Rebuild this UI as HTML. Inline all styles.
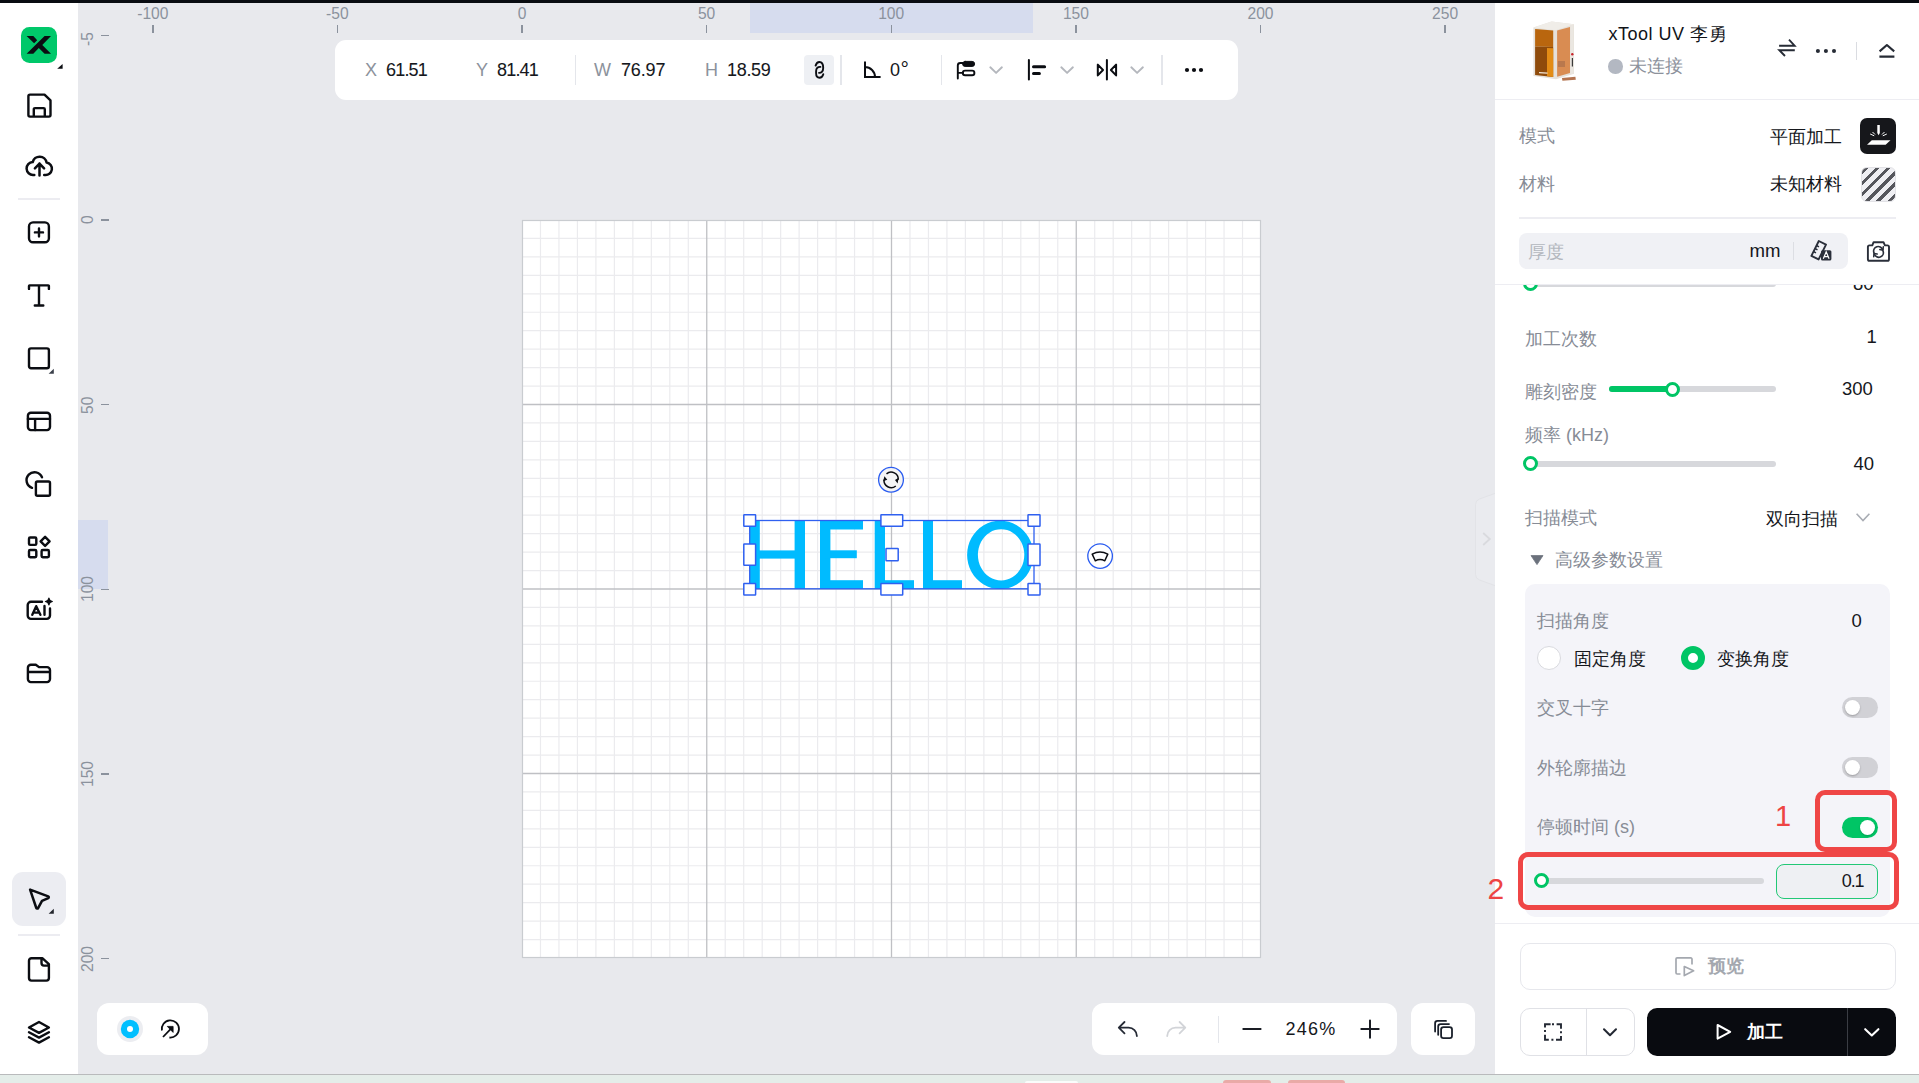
<!DOCTYPE html>
<html><head><meta charset="utf-8">
<style>
*{box-sizing:border-box;margin:0;padding:0}
html,body{width:1919px;height:1083px;overflow:hidden}
body{background:#e8e9ed;font-family:"Liberation Sans",sans-serif;position:relative;color:#111}
.a{position:absolute}
.t{position:absolute;white-space:nowrap;line-height:1}
.rl{position:absolute;text-align:center;font-size:15.6px;line-height:15px;color:#8b929d}
.rlv{position:absolute;width:22px;font-size:15.6px;line-height:22px;color:#8b929d;writing-mode:vertical-rl;transform:rotate(180deg);text-align:center}
.tk{position:absolute;background:#8b929d}
svg{position:absolute;overflow:visible}
.ic{fill:none;stroke:#0b0d12;stroke-linecap:round;stroke-linejoin:round}
.gray{color:#8a909b}
</style></head><body>
<!-- top dark bar -->
<div class="a" style="left:0;top:0;width:1919px;height:3px;background:#090c11"></div>

<!-- canvas rulers -->
<div class="a" style="left:750px;top:3px;width:283px;height:30px;background:#d6dcee"></div>
<div class="a" style="left:78px;top:520px;width:30px;height:69px;background:#d6dcee"></div>
<div class="a" style="left:78px;top:3px;width:1417px;height:1071px;overflow:hidden">
 <div class="a" style="left:-78px;top:-3px;width:1919px;height:1083px">
 <div class="rl" style="left:122.8px;top:5.8px;width:60px">-100</div><div class="tk" style="left:152.0px;top:25px;width:1.5px;height:8px"></div><div class="rl" style="left:307.4px;top:5.8px;width:60px">-50</div><div class="tk" style="left:336.6px;top:25px;width:1.5px;height:8px"></div><div class="rl" style="left:492.0px;top:5.8px;width:60px">0</div><div class="tk" style="left:521.2px;top:25px;width:1.5px;height:8px"></div><div class="rl" style="left:676.6px;top:5.8px;width:60px">50</div><div class="tk" style="left:705.9px;top:25px;width:1.5px;height:8px"></div><div class="rl" style="left:861.2px;top:5.8px;width:60px">100</div><div class="tk" style="left:890.5px;top:25px;width:1.5px;height:8px"></div><div class="rl" style="left:1045.9px;top:5.8px;width:60px">150</div><div class="tk" style="left:1075.1px;top:25px;width:1.5px;height:8px"></div><div class="rl" style="left:1230.5px;top:5.8px;width:60px">200</div><div class="tk" style="left:1259.8px;top:25px;width:1.5px;height:8px"></div><div class="rl" style="left:1415.1px;top:5.8px;width:60px">250</div><div class="tk" style="left:1444.4px;top:25px;width:1.5px;height:8px"></div><div class="rlv" style="left:76.8px;top:5.4px;height:60px">-50</div><div class="tk" style="left:100.5px;top:34.6px;width:8px;height:1.5px"></div><div class="rlv" style="left:76.8px;top:190.0px;height:60px">0</div><div class="tk" style="left:100.5px;top:219.2px;width:8px;height:1.5px"></div><div class="rlv" style="left:76.8px;top:374.6px;height:60px">50</div><div class="tk" style="left:100.5px;top:403.9px;width:8px;height:1.5px"></div><div class="rlv" style="left:76.8px;top:559.2px;height:60px">100</div><div class="tk" style="left:100.5px;top:588.5px;width:8px;height:1.5px"></div><div class="rlv" style="left:76.8px;top:743.9px;height:60px">150</div><div class="tk" style="left:100.5px;top:773.1px;width:8px;height:1.5px"></div><div class="rlv" style="left:76.8px;top:928.5px;height:60px">200</div><div class="tk" style="left:100.5px;top:957.8px;width:8px;height:1.5px"></div>
 </div>
</div>
<div class="a" style="left:78px;top:3px;width:30px;height:30px;background:#e8e9ed"></div>

<!-- grid -->
<div class="a" style="left:522px;top:220px;width:739px;height:738px;background:#fff">
<svg width="739" height="738" style="position:absolute;left:0;top:0"><line x1="18.48" y1="0" x2="18.48" y2="738" stroke="#ebebee" stroke-width="1.2"/><line x1="36.95" y1="0" x2="36.95" y2="738" stroke="#ebebee" stroke-width="1.2"/><line x1="55.42" y1="0" x2="55.42" y2="738" stroke="#ebebee" stroke-width="1.2"/><line x1="73.90" y1="0" x2="73.90" y2="738" stroke="#ebebee" stroke-width="1.2"/><line x1="92.38" y1="0" x2="92.38" y2="738" stroke="#ebebee" stroke-width="1.2"/><line x1="110.85" y1="0" x2="110.85" y2="738" stroke="#ebebee" stroke-width="1.2"/><line x1="129.32" y1="0" x2="129.32" y2="738" stroke="#ebebee" stroke-width="1.2"/><line x1="147.80" y1="0" x2="147.80" y2="738" stroke="#ebebee" stroke-width="1.2"/><line x1="166.28" y1="0" x2="166.28" y2="738" stroke="#ebebee" stroke-width="1.2"/><line x1="203.22" y1="0" x2="203.22" y2="738" stroke="#ebebee" stroke-width="1.2"/><line x1="221.70" y1="0" x2="221.70" y2="738" stroke="#ebebee" stroke-width="1.2"/><line x1="240.18" y1="0" x2="240.18" y2="738" stroke="#ebebee" stroke-width="1.2"/><line x1="258.65" y1="0" x2="258.65" y2="738" stroke="#ebebee" stroke-width="1.2"/><line x1="277.12" y1="0" x2="277.12" y2="738" stroke="#ebebee" stroke-width="1.2"/><line x1="295.60" y1="0" x2="295.60" y2="738" stroke="#ebebee" stroke-width="1.2"/><line x1="314.07" y1="0" x2="314.07" y2="738" stroke="#ebebee" stroke-width="1.2"/><line x1="332.55" y1="0" x2="332.55" y2="738" stroke="#ebebee" stroke-width="1.2"/><line x1="351.02" y1="0" x2="351.02" y2="738" stroke="#ebebee" stroke-width="1.2"/><line x1="387.98" y1="0" x2="387.98" y2="738" stroke="#ebebee" stroke-width="1.2"/><line x1="406.45" y1="0" x2="406.45" y2="738" stroke="#ebebee" stroke-width="1.2"/><line x1="424.93" y1="0" x2="424.93" y2="738" stroke="#ebebee" stroke-width="1.2"/><line x1="443.40" y1="0" x2="443.40" y2="738" stroke="#ebebee" stroke-width="1.2"/><line x1="461.88" y1="0" x2="461.88" y2="738" stroke="#ebebee" stroke-width="1.2"/><line x1="480.35" y1="0" x2="480.35" y2="738" stroke="#ebebee" stroke-width="1.2"/><line x1="498.82" y1="0" x2="498.82" y2="738" stroke="#ebebee" stroke-width="1.2"/><line x1="517.30" y1="0" x2="517.30" y2="738" stroke="#ebebee" stroke-width="1.2"/><line x1="535.77" y1="0" x2="535.77" y2="738" stroke="#ebebee" stroke-width="1.2"/><line x1="572.73" y1="0" x2="572.73" y2="738" stroke="#ebebee" stroke-width="1.2"/><line x1="591.20" y1="0" x2="591.20" y2="738" stroke="#ebebee" stroke-width="1.2"/><line x1="609.67" y1="0" x2="609.67" y2="738" stroke="#ebebee" stroke-width="1.2"/><line x1="628.15" y1="0" x2="628.15" y2="738" stroke="#ebebee" stroke-width="1.2"/><line x1="646.62" y1="0" x2="646.62" y2="738" stroke="#ebebee" stroke-width="1.2"/><line x1="665.10" y1="0" x2="665.10" y2="738" stroke="#ebebee" stroke-width="1.2"/><line x1="683.58" y1="0" x2="683.58" y2="738" stroke="#ebebee" stroke-width="1.2"/><line x1="702.05" y1="0" x2="702.05" y2="738" stroke="#ebebee" stroke-width="1.2"/><line x1="720.52" y1="0" x2="720.52" y2="738" stroke="#ebebee" stroke-width="1.2"/><line x1="0" y1="18.45" x2="739" y2="18.45" stroke="#ebebee" stroke-width="1.2"/><line x1="0" y1="36.90" x2="739" y2="36.90" stroke="#ebebee" stroke-width="1.2"/><line x1="0" y1="55.35" x2="739" y2="55.35" stroke="#ebebee" stroke-width="1.2"/><line x1="0" y1="73.80" x2="739" y2="73.80" stroke="#ebebee" stroke-width="1.2"/><line x1="0" y1="92.25" x2="739" y2="92.25" stroke="#ebebee" stroke-width="1.2"/><line x1="0" y1="110.70" x2="739" y2="110.70" stroke="#ebebee" stroke-width="1.2"/><line x1="0" y1="129.15" x2="739" y2="129.15" stroke="#ebebee" stroke-width="1.2"/><line x1="0" y1="147.60" x2="739" y2="147.60" stroke="#ebebee" stroke-width="1.2"/><line x1="0" y1="166.05" x2="739" y2="166.05" stroke="#ebebee" stroke-width="1.2"/><line x1="0" y1="202.95" x2="739" y2="202.95" stroke="#ebebee" stroke-width="1.2"/><line x1="0" y1="221.40" x2="739" y2="221.40" stroke="#ebebee" stroke-width="1.2"/><line x1="0" y1="239.85" x2="739" y2="239.85" stroke="#ebebee" stroke-width="1.2"/><line x1="0" y1="258.30" x2="739" y2="258.30" stroke="#ebebee" stroke-width="1.2"/><line x1="0" y1="276.75" x2="739" y2="276.75" stroke="#ebebee" stroke-width="1.2"/><line x1="0" y1="295.20" x2="739" y2="295.20" stroke="#ebebee" stroke-width="1.2"/><line x1="0" y1="313.65" x2="739" y2="313.65" stroke="#ebebee" stroke-width="1.2"/><line x1="0" y1="332.10" x2="739" y2="332.10" stroke="#ebebee" stroke-width="1.2"/><line x1="0" y1="350.55" x2="739" y2="350.55" stroke="#ebebee" stroke-width="1.2"/><line x1="0" y1="387.45" x2="739" y2="387.45" stroke="#ebebee" stroke-width="1.2"/><line x1="0" y1="405.90" x2="739" y2="405.90" stroke="#ebebee" stroke-width="1.2"/><line x1="0" y1="424.35" x2="739" y2="424.35" stroke="#ebebee" stroke-width="1.2"/><line x1="0" y1="442.80" x2="739" y2="442.80" stroke="#ebebee" stroke-width="1.2"/><line x1="0" y1="461.25" x2="739" y2="461.25" stroke="#ebebee" stroke-width="1.2"/><line x1="0" y1="479.70" x2="739" y2="479.70" stroke="#ebebee" stroke-width="1.2"/><line x1="0" y1="498.15" x2="739" y2="498.15" stroke="#ebebee" stroke-width="1.2"/><line x1="0" y1="516.60" x2="739" y2="516.60" stroke="#ebebee" stroke-width="1.2"/><line x1="0" y1="535.05" x2="739" y2="535.05" stroke="#ebebee" stroke-width="1.2"/><line x1="0" y1="571.95" x2="739" y2="571.95" stroke="#ebebee" stroke-width="1.2"/><line x1="0" y1="590.40" x2="739" y2="590.40" stroke="#ebebee" stroke-width="1.2"/><line x1="0" y1="608.85" x2="739" y2="608.85" stroke="#ebebee" stroke-width="1.2"/><line x1="0" y1="627.30" x2="739" y2="627.30" stroke="#ebebee" stroke-width="1.2"/><line x1="0" y1="645.75" x2="739" y2="645.75" stroke="#ebebee" stroke-width="1.2"/><line x1="0" y1="664.20" x2="739" y2="664.20" stroke="#ebebee" stroke-width="1.2"/><line x1="0" y1="682.65" x2="739" y2="682.65" stroke="#ebebee" stroke-width="1.2"/><line x1="0" y1="701.10" x2="739" y2="701.10" stroke="#ebebee" stroke-width="1.2"/><line x1="0" y1="719.55" x2="739" y2="719.55" stroke="#ebebee" stroke-width="1.2"/><line x1="184.75" y1="0" x2="184.75" y2="738" stroke="#bfc0c4" stroke-width="1.3"/><line x1="369.50" y1="0" x2="369.50" y2="738" stroke="#bfc0c4" stroke-width="1.3"/><line x1="554.25" y1="0" x2="554.25" y2="738" stroke="#bfc0c4" stroke-width="1.3"/><line x1="0" y1="184.50" x2="739" y2="184.50" stroke="#bfc0c4" stroke-width="1.3"/><line x1="0" y1="369.00" x2="739" y2="369.00" stroke="#bfc0c4" stroke-width="1.3"/><line x1="0" y1="553.50" x2="739" y2="553.50" stroke="#bfc0c4" stroke-width="1.3"/><rect x="0.5" y="0.5" width="738" height="737" fill="none" stroke="#c9ccd0" stroke-width="1.2"/></svg>
</div>

<!-- left sidebar -->
<div class="a" style="left:0;top:3px;width:78px;height:1071px;background:#fff"></div>
<!-- logo -->
<svg style="left:21px;top:27px" width="42" height="43" viewBox="0 0 42 43">
 <rect x="0" y="0" width="36" height="36" rx="8.5" fill="#00c86a"/>
 <path d="M5.6,26.8 L12.3,26.8 L17.8,21.1 L23.6,26.8 L30,26.8 L21.3,17.9 L30,9.05 L23.6,9.05 Z M5.6,9.05 L12.3,9.05 L16.2,13.2 L13.1,16.3 Z" fill="#0b0d12"/>
 <path d="M36.2,41.8 L41.6,37 L41.6,41.8 Z" fill="#0b0d12"/>
</svg>
<!-- save -->
<svg class="ic" style="left:24px;top:90px" width="30" height="30" viewBox="0 0 30 30" stroke-width="2.4">
 <path d="M6,4.6 H20.5 L26.5,10.4 V25 a1.6,1.6 0 0 1 -1.6,1.6 H6 a1.6,1.6 0 0 1 -1.6,-1.6 V6.2 a1.6,1.6 0 0 1 1.6,-1.6 Z M9.8,26.6 V19.3 a1.2,1.2 0 0 1 1.2,-1.2 H19.6 a1.2,1.2 0 0 1 1.2,1.2 V26.6"/>
</svg>
<!-- cloud upload -->
<svg class="ic" style="left:24px;top:150px" width="30" height="30" viewBox="0 0 30 30" stroke-width="2.5">
 <path d="M10.3,24.9 H9.3 A6.4,6.4 0 0 1 8.7,12.1 A7.1,7.1 0 0 1 22.6,12.6 A6.2,6.2 0 0 1 20.8,24.9 H20.2 M15.5,25.5 V13.6 M10.9,18.4 L15.5,13.6 L20.1,18.4"/>
</svg>
<div class="a" style="left:18px;top:198px;width:42px;height:2px;background:#ececf1"></div>
<!-- plus square -->
<svg class="ic" style="left:24px;top:217px" width="30" height="30" viewBox="0 0 30 30" stroke-width="2.4">
 <rect x="5" y="5.4" width="19.9" height="19.9" rx="4"/>
 <path d="M10.9,15.4 H19 M15,11.4 V19.4"/>
</svg>
<!-- T -->
<svg class="ic" style="left:24px;top:280px" width="30" height="30" viewBox="0 0 30 30" stroke-width="2.4">
 <path d="M5,8.9 V6 a0.6,0.6 0 0 1 0.6,-0.6 H24.3 a0.6,0.6 0 0 1 0.6,0.6 V8.9 M15,5.4 V25.5 M10.8,25.5 H19.3"/>
</svg>
<!-- square -->
<svg class="ic" style="left:24px;top:343px" width="30" height="30" viewBox="0 0 30 30" stroke-width="2.4">
 <rect x="5" y="5.4" width="19.9" height="19.9" rx="2"/>
</svg>
<svg style="left:48px;top:368px" width="6" height="6" viewBox="0 0 6 6"><path d="M0.6,5.8 L5.8,0.8 L5.8,5.8 Z" fill="#3b404b"/></svg>
<!-- layout -->
<svg class="ic" style="left:24px;top:406px" width="30" height="30" viewBox="0 0 30 30" stroke-width="2.4">
 <rect x="3.9" y="6.8" width="22.1" height="17.3" rx="3"/>
 <path d="M3.9,12.9 H26 M11.1,12.9 V24.1"/>
</svg>
<!-- shapes -->
<svg class="ic" style="left:24px;top:469px" width="30" height="30" viewBox="0 0 30 30" stroke-width="2.4">
 <path d="M18,8.3 A8,8 0 1 0 8,18.8"/>
 <rect x="11.9" y="12.5" width="14.1" height="14.2" rx="1.5"/>
</svg>
<!-- apps -->
<svg class="ic" style="left:24px;top:532px" width="30" height="30" viewBox="0 0 30 30" stroke-width="2.4">
 <rect x="5" y="5.5" width="7.3" height="7.4" rx="1.2"/>
 <rect x="5" y="18" width="7.3" height="7.3" rx="1.2"/>
 <rect x="17.6" y="18" width="7.3" height="7.3" rx="1.2"/>
 <path d="M21.1,4.8 L25.6,9.4 L21.1,13.9 L16.6,9.4 Z"/>
</svg>
<!-- AI -->
<svg class="ic" style="left:24px;top:594px" width="30" height="30" viewBox="0 0 30 30" stroke-width="2.4">
 <path d="M18,7.8 H7 a3.3,3.3 0 0 0 -3.3,3.3 V21.6 a3.3,3.3 0 0 0 3.3,3.3 H22.7 a3.3,3.3 0 0 0 3.3,-3.3 V14.4"/>
 <path d="M8.3,20.8 L12.2,12.2 L16.4,20.8 M9.8,18.6 H14.8 M20.5,11.9 V20.8"/>
 <path d="M24.9,4.2 Q25.3,7.1 28.4,7.5 Q25.3,7.9 24.9,10.9 Q24.5,7.9 21.4,7.5 Q24.5,7.1 24.9,4.2 Z" fill="#0b0d12" stroke-width="1.2"/>
</svg>
<!-- folder -->
<svg class="ic" style="left:24px;top:658px" width="30" height="30" viewBox="0 0 30 30" stroke-width="2.4">
 <path d="M3.9,9.8 a3,3 0 0 1 3,-3 H11.8 L15,9.1 H23 a3,3 0 0 1 3,3 V21.1 a3,3 0 0 1 -3,3 H6.9 a3,3 0 0 1 -3,-3 Z M3.9,14 H26"/>
</svg>
<!-- select tool (active) -->
<div class="a" style="left:12px;top:872px;width:54px;height:54px;border-radius:11px;background:#ecedf2"></div>
<svg class="ic" style="left:24px;top:884px" width="30" height="30" viewBox="0 0 30 30" stroke-width="2.5">
 <path d="M6.1,5.6 L24.2,12.3 a1,1 0 0 1 0.1,1.8 L18,16.9 L14.1,24.1 a1,1 0 0 1 -1.8,-0.1 Z"/>
</svg>
<svg style="left:47.5px;top:908px" width="6" height="6" viewBox="0 0 6 6"><path d="M0.6,5.8 L5.8,0.8 L5.8,5.8 Z" fill="#23262d"/></svg>
<div class="a" style="left:18px;top:934px;width:42px;height:2px;background:#ececf1"></div>
<!-- file -->
<svg class="ic" style="left:24px;top:954px" width="30" height="30" viewBox="0 0 30 30" stroke-width="2.4">
 <path d="M7.5,4.2 H18.3 L24.9,10.2 V24.1 a2.5,2.5 0 0 1 -2.5,2.5 H7.5 a2.5,2.5 0 0 1 -2.5,-2.5 V6.7 a2.5,2.5 0 0 1 2.5,-2.5 Z M17.5,4.4 V9.1 a2.5,2.5 0 0 0 2.5,2.5 H24.9"/>
</svg>
<!-- layers -->
<svg class="ic" style="left:24px;top:1017px" width="30" height="30" viewBox="0 0 30 30" stroke-width="2.4">
 <path d="M15,5 L24.9,10.5 L15,15.9 L5,10.5 Z M5,15.2 L15,20.6 L24.9,15.2 M5,20.2 L15,25.6 L24.9,20.2"/>
</svg>

<svg style="left:1470px;top:488px" width="30" height="104" viewBox="1470 488 30 104">
 <path d="M1496,493 L1479.5,499 Q1475.5,500.5 1475.5,504.5 V574.5 Q1475.5,578.5 1479.5,580 L1496,586" fill="#eaebef" stroke="#e2e3e7" stroke-width="1"/>
 <path d="M1483.2,533 L1489.8,539 L1483.2,545" fill="none" stroke="#d9dade" stroke-width="1.8"/>
</svg>
<!-- toolbar -->
<div class="a" style="left:335px;top:40px;width:903px;height:60px;background:#fff;border-radius:11px"></div>
<div class="t gray" style="left:365px;top:61px;font-size:18px;letter-spacing:-0.3px;color:#8c929c">X</div>
<div class="t" style="left:386px;top:61px;font-size:18px;letter-spacing:-0.8px;color:#15171c;-webkit-text-stroke:0.08px #15171c">61.51</div>
<div class="t gray" style="left:476px;top:61px;font-size:18px;color:#8c929c">Y</div>
<div class="t" style="left:497px;top:61px;font-size:18px;letter-spacing:-0.8px;color:#15171c;-webkit-text-stroke:0.08px #15171c">81.41</div>
<div class="a" style="left:574.5px;top:55px;width:1.5px;height:30px;background:#e4e6eb"></div>
<div class="t gray" style="left:594px;top:61px;font-size:18px;letter-spacing:-0.3px;color:#8c929c">W</div>
<div class="t" style="left:621px;top:61px;font-size:18px;letter-spacing:-0.15px;color:#15171c;-webkit-text-stroke:0.08px #15171c">76.97</div>
<div class="t gray" style="left:705px;top:61px;font-size:18px;color:#8c929c">H</div>
<div class="t" style="left:727px;top:61px;font-size:18px;letter-spacing:-0.3px;color:#15171c;-webkit-text-stroke:0.08px #15171c">18.59</div>
<div class="a" style="left:804px;top:55px;width:30px;height:30px;background:#eef0f4;border-radius:4px"></div>
<svg class="ic" style="left:800px;top:52px" width="36" height="36" viewBox="800 52 36 36" stroke-width="1.9">
 <path d="M815.6,65.6 C816.4,63 817.8,62 819.4,62 C821.8,62 823.2,64.5 823.2,68 C823.2,71.5 821.2,73 819,72.9"/>
 <path d="M820.4,66.9 C818,66.7 816.1,68.2 816.1,71 L816.1,73.2 C816.1,76.4 817.8,77.7 819.5,77.7 C821.3,77.7 822.7,76.2 823.3,74.2"/>
</svg>
<div class="a" style="left:840.3px;top:55px;width:1.5px;height:30px;background:#e4e6eb"></div>
<svg class="ic" style="left:800px;top:52px" width="100" height="36" viewBox="0 0 100 36" stroke-width="2" style="stroke-linecap:butt">
 <path d="M65,9.4 V25 H80.6 M65,15 A10,10 0 0 1 75,25" style="stroke-linecap:butt;stroke-linejoin:miter"/>
</svg>
<div class="t" style="left:890px;top:61px;font-size:18px;letter-spacing:0.5px;color:#15171c">0<span style="font-size:21px;line-height:0;position:relative;top:-0.5px">°</span></div>
<div class="a" style="left:940.8px;top:55px;width:1.5px;height:30px;background:#e4e6eb"></div>
<!-- arrange -->
<svg class="ic" style="left:950px;top:52px" width="200" height="36" viewBox="0 0 200 36" stroke-width="1.9">
 <path d="M7.8,26.6 V13.5 a2.5,2.5 0 0 1 2.5,-2.5 H13 M7.8,20.9 H13"/>
 <rect x="12.6" y="9.4" width="12" height="5" rx="2.5" fill="#0b0d12" stroke-width="1"/>
 <rect x="12.8" y="18.6" width="11.6" height="4.6" rx="2.3"/>
 <path d="M40.3,15.3 L46.1,20.9 L51.9,15.3" stroke="#b4b7bd"/>
 <path d="M78.9,7.9 V27.6" stroke-width="2"/>
 <path d="M83.5,14.8 H94.6 M83.5,21.4 H89.4" stroke-width="3"/>
 <path d="M111.3,15.3 L117.1,20.9 L122.9,15.3" stroke="#b4b7bd"/>
 <path d="M156.9,7.9 V27.6" stroke-width="2"/>
 <path d="M147.8,12.6 V23.4 L153,18 Z M166.1,12.6 V23.4 L160.9,18 Z" stroke-width="2"/>
 <path d="M181.3,15.3 L187.1,20.9 L192.9,15.3" stroke="#b4b7bd"/>
</svg>
<div class="a" style="left:1161.3px;top:55px;width:1.5px;height:30px;background:#e4e6eb"></div>
<svg style="left:1180px;top:63px" width="20" height="14" viewBox="0 0 20 14">
 <circle cx="7" cy="7" r="2.1" fill="#0b0d12"/><circle cx="14" cy="7" r="2.1" fill="#0b0d12"/><circle cx="21" cy="7" r="2.1" fill="#0b0d12"/>
</svg>

<!-- HELLO object -->
<svg style="left:700px;top:450px" width="440" height="160" viewBox="700 450 440 160">
 <g fill="#00bbff">
  <rect x="750" y="520.5" width="9.8" height="68.5"/>
  <rect x="794.6" y="520.5" width="10.4" height="68.5"/>
  <rect x="755" y="550.4" width="45" height="8.2"/>
  <rect x="820" y="520.5" width="10.4" height="68.5"/>
  <rect x="825" y="520.5" width="38" height="9"/>
  <rect x="825" y="550.3" width="31.8" height="7.9"/>
  <rect x="825" y="580.2" width="38" height="8.8"/>
  <rect x="874.7" y="520.5" width="10.3" height="68.5"/>
  <rect x="880" y="580.2" width="34" height="8.8"/>
  <rect x="923" y="520.5" width="10" height="68.5"/>
  <rect x="928" y="580.2" width="34" height="8.8"/>
  <path fill-rule="evenodd" d="M1000.2,520.7 a33.1,34.2 0 1 0 0.01,0 Z M1001.1,529.2 a23.2,25.6 0 1 1 -0.01,0 Z"/>
 </g>
 <rect x="749.7" y="520.5" width="284.3" height="68.3" fill="none" stroke="#2f60f0" stroke-width="1.3"/>
 <g fill="#fff" stroke="#2f60f0" stroke-width="1.5">
  <rect x="743.8" y="514.7" width="11.8" height="11.5" rx="0.5"/>
  <rect x="743.8" y="544" width="11.8" height="21.3" rx="0.5"/>
  <rect x="743.8" y="583.4" width="11.8" height="11.7" rx="0.5"/>
  <rect x="880.9" y="514.7" width="21.8" height="11.5" rx="0.5"/>
  <rect x="886" y="548.6" width="12.2" height="12.1" rx="0.5"/>
  <rect x="880.9" y="583.4" width="21.8" height="11.7" rx="0.5"/>
  <rect x="1028" y="514.7" width="12" height="11.5" rx="0.5"/>
  <rect x="1028" y="544" width="12" height="21.6" rx="0.5"/>
  <rect x="1028" y="583.4" width="12" height="11.7" rx="0.5"/>
 </g>
 <circle cx="891" cy="479.8" r="12.4" fill="#f4f4f5" stroke="#2a5cf0" stroke-width="1.3"/>
 <g fill="none" stroke="#0b0d12" stroke-width="1.5">
  <path d="M886.5,473.8 A7.2,7.2 0 0 1 898.3,479.7"/>
  <path d="M895.8,486 A7.2,7.2 0 0 1 884.1,479.5"/>
 </g>
 <path d="M884.4,476.2 L883.2,481.2 L887.3,479.8 Z M897.6,483.6 L898.6,477.8 L895,480 Z" fill="#0b0d12"/>
 <circle cx="1100.1" cy="556.1" r="12.3" fill="#fff" stroke="#2a5cf0" stroke-width="1.3"/>
 <path d="M1092.2,554.1 Q1100,550 1107.8,554.1 L1104.8,560.8 Q1100,558.4 1095.3,560.8 Z" fill="none" stroke="#0b0d12" stroke-width="1.5" stroke-linejoin="round"/>
</svg>

<!-- bottom-left widget -->
<div class="a" style="left:97px;top:1003px;width:111px;height:52px;background:#fff;border-radius:12px"></div>
<svg style="left:110px;top:1010px" width="80" height="40" viewBox="110 1010 80 40">
 <circle cx="130" cy="1029" r="13" fill="#ecedf1"/>
 <circle cx="130" cy="1029" r="9.2" fill="#00bfff"/>
 <circle cx="130" cy="1029" r="3" fill="#fff"/>
 <path d="M161.9,1030.5 A8.6,8.6 0 1 1 169.4,1037.5" fill="none" stroke="#0b0d12" stroke-width="1.8"/>
 <path d="M163,1037 L172,1027.6" fill="none" stroke="#0b0d12" stroke-width="1.8"/>
 <path d="M167.3,1026.4 H173.1 V1032.4 Z" fill="#0b0d12" stroke="#0b0d12" stroke-width="0.8"/>
</svg>
<!-- bottom-right widgets -->
<div class="a" style="left:1092px;top:1003px;width:305px;height:52px;background:#fff;border-radius:12px"></div>
<div class="a" style="left:1411px;top:1003px;width:64px;height:52px;background:#fff;border-radius:12px"></div>
<svg class="ic" style="left:1100px;top:1010px" width="380" height="40" viewBox="1100 1010 380 40" stroke-width="1.8">
 <path d="M1124.5,1022 L1118.8,1027.7 L1124.5,1033.3 M1119,1027.7 H1128.6 A8.3,8.3 0 0 1 1136.9,1036" stroke="#252a35"/>
 <path d="M1179.6,1022 L1185.3,1027.7 L1179.6,1033.3 M1185.1,1027.7 H1175.5 A8.3,8.3 0 0 0 1167.2,1036" stroke="#d2d4d8"/>
 <path d="M1243.3,1029 H1260.6 M1361.3,1029 H1378.7 M1370,1020.5 V1037.7" stroke="#1a1d24" stroke-width="2"/>
 <path d="M1441.1,1029.5 a2.4,2.4 0 0 1 2.4,-2.4 H1449.6 a2.4,2.4 0 0 1 2.4,2.4 V1035.7 a2.4,2.4 0 0 1 -2.4,2.4 H1443.5 a2.4,2.4 0 0 1 -2.4,-2.4 Z" stroke="#1a202b"/>
 <path d="M1438.2,1034.8 V1026.5 a2.4,2.4 0 0 1 2.4,-2.4 H1449" stroke="#1a202b"/>
 <path d="M1435.1,1031.6 V1023.3 a2.4,2.4 0 0 1 2.4,-2.4 H1446" stroke="#1a202b"/>
</svg>
<div class="a" style="left:1217.5px;top:1016px;width:1.5px;height:27px;background:#e4e6eb"></div>
<div class="t" style="left:1285.5px;top:1020px;font-size:18px;letter-spacing:1.2px;color:#15171c">246%</div>

<!-- right panel -->
<div class="a" style="left:1495px;top:3px;width:424px;height:1071px;background:#fff"></div>
<!-- machine image -->
<svg style="left:1527px;top:16px" width="56" height="70" viewBox="0 0 56 70">
 <path d="M6.4,11.6 L24.6,5.6 L47,8.2 L47,57.8 L29,63.2 L6.4,60 Z" fill="#e6e1da"/>
 <path d="M6.4,11.6 L24.6,5.6 L47,8.2 L28.6,14.2 Z" fill="#f0ede8"/>
 <path d="M8.1,12.9 L26.2,14.6 L26.2,31 L8.1,30.6 Z" fill="#b9660e"/>
 <path d="M8.1,30.6 L26.2,31 L26.2,61 L8.1,59 Z" fill="#8f4b0b"/>
 <path d="M20,32 L26.2,32.2 L26.2,61 L20,60.3 Z" fill="#e38c15"/>
 <path d="M12,56 L20.5,56.6 L20.5,57.8 L12,57.2 Z" fill="#f3e6d6"/>
 <path d="M30.1,14.6 L43,11 L43,56.9 L30.1,60.8 Z" fill="#d98c52"/>
 <rect x="31" y="45" width="7" height="6" fill="#b9784d"/>
 <path d="M43.4,9.5 L46.6,8.8 L46.6,57.6 L43.4,58 Z" fill="#ebe7e1"/>
 <circle cx="45.3" cy="38.2" r="1.2" fill="#c8232b"/>
 <rect x="44.8" y="42" width="1.2" height="8.5" fill="#3b3b3b"/>
 <path d="M35,62.1 L48.4,60.7 L48.8,63.7 L35.4,64.8 Z" fill="#b47450"/>
</svg>
<div class="t" style="left:1608.5px;top:24.5px;font-size:18px;letter-spacing:0.5px;color:#111318">xTool UV 李勇</div>
<div class="a" style="left:1608px;top:59px;width:14.5px;height:14.5px;border-radius:50%;background:#b3b8c2"></div>
<div class="t" style="left:1629px;top:57px;font-size:18px;color:#8c919b">未连接</div>
<svg class="ic" style="left:1770px;top:30px" width="140" height="40" viewBox="1770 30 140 40" stroke-width="1.9">
 <path d="M1779.1,45.7 H1794.6 L1789,39.7 M1794.8,50.2 H1779.3 L1785,56" stroke="#262b35" stroke-linecap="butt" stroke-linejoin="miter"/>
 <path d="M1879.6,51.4 L1886.9,45 L1894.2,51.4 M1879.4,56.6 H1894.4" stroke="#262b35" stroke-width="2.1" stroke-linecap="butt"/>
</svg>
<svg style="left:1810px;top:44px" width="30" height="14" viewBox="1810 44 30 14">
 <circle cx="1817.9" cy="51" r="2.05" fill="#262b35"/><circle cx="1825.9" cy="51" r="2.05" fill="#262b35"/><circle cx="1834" cy="51" r="2.05" fill="#262b35"/>
</svg>
<div class="a" style="left:1855.7px;top:42px;width:1.4px;height:18px;background:#dadce1"></div>
<div class="a" style="left:1495px;top:98.5px;width:424px;height:1.5px;background:#ededf2"></div>

<div class="t gray" style="left:1519px;top:127px;font-size:18px;color:#878c96">模式</div>
<div class="t" style="left:1770px;top:127.5px;font-size:18px;color:#15171c">平面加工</div>
<div class="a" style="left:1860px;top:118px;width:36px;height:36px;border-radius:7px;background:#16171b"></div>
<svg style="left:1860px;top:118px" width="36" height="36" viewBox="1860 118 36 36">
 <path d="M1877.3,125 H1879.8 V133 L1878.55,135.2 L1877.3,133 Z" fill="#fff"/>
 <path d="M1870.2,134 L1874.2,135.8 M1886.8,134 L1882.8,135.8 M1872.5,132 L1875,134.5 M1884.5,132 L1882,134.5" stroke="#fff" stroke-width="1" fill="none"/>
 <path d="M1867,144.8 L1871.8,140.2 L1890.5,140.2 L1885.6,144.8 Z" fill="#fff"/>
</svg>
<div class="t gray" style="left:1519px;top:174.5px;font-size:18px;color:#878c96">材料</div>
<div class="t" style="left:1770px;top:174.5px;font-size:18px;color:#15171c">未知材料</div>
<div class="a" style="left:1860.5px;top:166.5px;width:35px;height:35px;border-radius:6px;border:1px solid #e2e2e6;background:repeating-linear-gradient(135deg,#efeff3 0,#efeff3 1.2px,#56575d 1.2px,#56575d 4.4px,#efeff3 4.4px,#efeff3 8px)"></div>
<div class="a" style="left:1519px;top:217px;width:377px;height:1.5px;background:#ededf2"></div>
<div class="a" style="left:1495px;top:283.5px;width:424px;height:1.2px;background:#ededf2;z-index:2"></div>

<!-- thickness input -->
<div class="a" style="left:1519px;top:233px;width:329px;height:36px;border-radius:8px;background:#f0f1f5"></div>
<div class="t" style="left:1527.5px;top:242.5px;font-size:18px;color:#b3b7be">厚度</div>
<div class="t" style="left:1749.5px;top:242px;font-size:18.6px;color:#15171c">mm</div>
<div class="a" style="left:1792.7px;top:242px;width:1.3px;height:18px;background:#dcdee3"></div>
<svg style="left:1806px;top:236px" width="32" height="30" viewBox="1806 236 32 30">
 <path d="M1818.8,241 L1826,244.6 L1818.6,259.4 L1811.4,255.8 Z" fill="none" stroke="#2a2f3a" stroke-width="1.9" stroke-linejoin="round"/>
 <path d="M1816.5,245.5 L1819,246.8 M1815,248.5 L1817.5,249.8 M1813.5,251.5 L1816,252.8" stroke="#2a2f3a" stroke-width="1.5"/>
 <rect x="1821" y="250.2" width="10.4" height="10.4" rx="1.6" fill="#2a2f3a"/>
 <path d="M1823.3,258.8 L1826.2,251.8 L1829.1,258.8 M1824.2,256.6 H1828.2" fill="none" stroke="#fff" stroke-width="1.2"/>
</svg>
<svg class="ic" style="left:1862px;top:236px" width="32" height="30" viewBox="1862 236 32 30" stroke-width="1.9">
 <path d="M1869.5,245.4 H1872.3 L1873.6,242.2 H1883.5 L1884.9,245.4 H1887.4 a1.6,1.6 0 0 1 1.6,1.6 V259.2 a1.6,1.6 0 0 1 -1.6,1.6 H1869.5 a1.6,1.6 0 0 1 -1.6,-1.6 V247 a1.6,1.6 0 0 1 1.6,-1.6 Z" stroke="#2a2f3a"/>
 <path d="M1873.9,252.6 A4.6,4.6 0 0 1 1882.6,249.6 M1883.1,251.2 A4.6,4.6 0 0 1 1874.4,254.2" stroke="#2a2f3a" stroke-width="1.7"/>
 <path d="M1883.3,246.8 L1883,250.2 L1879.8,249.6 M1873.7,256.8 L1874,253.4 L1877.2,254" stroke="#2a2f3a" stroke-width="1.5"/>
</svg>

<!-- scroll content -->
<div class="a" style="left:1495px;top:284px;width:424px;height:639px;overflow:hidden">
 <div class="a" style="left:-1495px;top:-284px;width:1919px;height:1083px">
  <!-- clipped slider -->
  <div class="a" style="left:1530px;top:280.5px;width:246px;height:6px;border-radius:3px;background:#d7d8dc"></div>
  <div class="a" style="left:1523.3px;top:276px;width:15px;height:15px;border-radius:50%;border:3px solid #00c565;background:#fff"></div>
  <div class="t" style="left:1853px;top:274.5px;font-size:18.5px;color:#15171c">80</div>

  <div class="t gray" style="left:1525px;top:329.5px;font-size:18px;color:#878c96">加工次数</div>
  <div class="t" style="left:1866.5px;top:327.5px;font-size:18.5px;color:#15171c">1</div>

  <div class="t gray" style="left:1525px;top:383px;font-size:18px;color:#878c96">雕刻密度</div>
  <div class="a" style="left:1609px;top:386px;width:167px;height:6px;border-radius:3px;background:#d7d8dc"></div>
  <div class="a" style="left:1609px;top:386px;width:64px;height:6px;border-radius:3px;background:#00c565"></div>
  <div class="a" style="left:1665.2px;top:381.5px;width:15px;height:15px;border-radius:50%;border:3px solid #00c565;background:#fff"></div>
  <div class="t" style="left:1842px;top:380px;font-size:18.5px;color:#15171c">300</div>

  <div class="t gray" style="left:1525px;top:425.5px;font-size:18px;color:#878c96">频率 (kHz)</div>
  <div class="a" style="left:1530px;top:460.7px;width:246px;height:6px;border-radius:3px;background:#d7d8dc"></div>
  <div class="a" style="left:1522.5px;top:456.2px;width:15px;height:15px;border-radius:50%;border:3px solid #00c565;background:#fff"></div>
  <div class="t" style="left:1853.5px;top:455px;font-size:18.5px;color:#15171c">40</div>

  <div class="t gray" style="left:1525px;top:509px;font-size:18px;color:#878c96">扫描模式</div>
  <div class="t" style="left:1766px;top:510px;font-size:18px;color:#15171c">双向扫描</div>
  <svg style="left:1850px;top:508px" width="26" height="20" viewBox="1850 508 26 20"><path d="M1856.6,513.8 L1863,520.6 L1869.4,513.8" fill="none" stroke="#a9adb4" stroke-width="1.6"/></svg>

  <svg style="left:1528px;top:552px" width="18" height="16" viewBox="1528 552 18 16"><path d="M1531,555.6 H1543 L1537,564.6 Z" fill="#6b717c" stroke="#6b717c" stroke-width="0.8" stroke-linejoin="round"/></svg>
  <div class="t gray" style="left:1555px;top:551px;font-size:18px;color:#878c96">高级参数设置</div>

  <!-- advanced box -->
  <div class="a" style="left:1525px;top:584px;width:365px;height:333px;border-radius:10px;background:#f4f4f9"></div>
  <div class="t gray" style="left:1537px;top:612px;font-size:18px;color:#878c96">扫描角度</div>
  <div class="t" style="left:1851.5px;top:611.5px;font-size:18.5px;color:#15171c">0</div>
  <div class="a" style="left:1537px;top:645.7px;width:24px;height:24px;border-radius:50%;border:1.5px solid #d9dadf;background:#fff"></div>
  <div class="t" style="left:1573.5px;top:650px;font-size:18px;color:#15171c">固定角度</div>
  <div class="a" style="left:1681px;top:645.7px;width:24px;height:24px;border-radius:50%;border:7.5px solid #00c565;background:#fff"></div>
  <div class="t" style="left:1717px;top:650px;font-size:18px;color:#15171c">变换角度</div>

  <div class="t gray" style="left:1537px;top:698.5px;font-size:18px;color:#878c96">交叉十字</div>
  <div class="a" style="left:1842px;top:696.8px;width:36px;height:21px;border-radius:11px;background:#d1d1d6"></div>
  <div class="a" style="left:1845px;top:700px;width:15px;height:15px;border-radius:50%;background:#fff;box-shadow:0 1px 2px rgba(0,0,0,0.25)"></div>

  <div class="t gray" style="left:1537px;top:758.5px;font-size:18px;color:#878c96">外轮廓描边</div>
  <div class="a" style="left:1842px;top:756.9px;width:36px;height:21px;border-radius:11px;background:#d1d1d6"></div>
  <div class="a" style="left:1845px;top:760px;width:15px;height:15px;border-radius:50%;background:#fff;box-shadow:0 1px 2px rgba(0,0,0,0.25)"></div>

  <div class="t gray" style="left:1537px;top:818px;font-size:18px;color:#878c96">停顿时间 (s)</div>
  <div class="a" style="left:1842px;top:816.8px;width:36px;height:21px;border-radius:11px;background:#00c565"></div>
  <div class="a" style="left:1860px;top:820px;width:15px;height:15px;border-radius:50%;background:#fff;box-shadow:0 1px 2px rgba(0,0,0,0.2)"></div>

  <div class="a" style="left:1536px;top:877.5px;width:228px;height:6px;border-radius:3px;background:#d7d8dc"></div>
  <div class="a" style="left:1534.3px;top:873px;width:15px;height:15px;border-radius:50%;border:3px solid #00c565;background:#fff"></div>
  <div class="a" style="left:1776px;top:863.5px;width:102px;height:35px;border-radius:8px;border:1px solid #22c876;background:#eef0f3"></div>
  <div class="t" style="left:1841.8px;top:871.5px;font-size:18px;letter-spacing:-1.1px;color:#15171c">0.1</div>
 </div>
</div>

<!-- annotations -->
<div class="a" style="left:1815px;top:790.2px;width:82.3px;height:61.6px;border:5px solid #ef4646;border-radius:10px"></div>
<div class="a" style="left:1518px;top:852.3px;width:381px;height:57.5px;border:5px solid #ef4646;border-radius:10px"></div>
<div class="t" style="left:1775px;top:802px;font-size:29px;color:#ee4444">1</div>
<div class="t" style="left:1487.5px;top:873.5px;font-size:30px;color:#ee4444">2</div>

<div class="a" style="left:1495px;top:922.5px;width:424px;height:1.5px;background:#ededf2"></div>
<!-- preview -->
<div class="a" style="left:1519.5px;top:942.5px;width:376.5px;height:47px;border-radius:10px;border:1px solid #e6e7ec;background:#fff"></div>
<svg class="ic" style="left:1670px;top:952px" width="30" height="30" viewBox="1670 952 30 30" stroke-width="1.7">
 <path d="M1680.5,974 H1677.2 a1.2,1.2 0 0 1 -1.2,-1.2 V959.1 a1.2,1.2 0 0 1 1.2,-1.2 H1690.8 a1.2,1.2 0 0 1 1.2,1.2 V964.4" stroke="#a4a8af" stroke-linecap="butt"/>
 <path d="M1684.3,966.5 L1693.6,970.8 L1684.3,975.5 Z" stroke="#a4a8af"/>
</svg>
<div class="t" style="left:1707.5px;top:957px;font-size:18px;font-weight:bold;color:#a4a8af">预览</div>
<!-- bottom buttons -->
<div class="a" style="left:1519.5px;top:1008px;width:115px;height:47.5px;border-radius:10px;border:1px solid #e0e1e6;background:#fff"></div>
<div class="a" style="left:1586px;top:1008px;width:1.2px;height:47.5px;background:#e0e1e6"></div>
<svg class="ic" style="left:1540px;top:1018px" width="80" height="28" viewBox="1540 1018 80 28" stroke-width="1.9">
 <path d="M1552,1024.3 H1561 V1039.7 H1545 V1024.3 Z" stroke="#232833" stroke-dasharray="2 2.6 8.8 2.6" stroke-linecap="butt" stroke-linejoin="miter"/>
 <path d="M1604,1029.2 L1610,1035.2 L1616,1029.2" stroke="#232833" stroke-width="2"/>
</svg>
<div class="a" style="left:1647px;top:1008px;width:249px;height:47.5px;border-radius:10px;background:#090b10"></div>
<div class="a" style="left:1846.5px;top:1008px;width:1px;height:47.5px;background:#3a3d44"></div>
<svg class="ic" style="left:1710px;top:1018px" width="180" height="28" viewBox="1710 1018 180 28" stroke-width="2">
 <path d="M1717.6,1025 L1730.2,1031.8 L1717.6,1038.6 Z" stroke="#fff"/>
 <path d="M1865.2,1029.2 L1871.8,1035.4 L1878.4,1029.2" stroke="#fff" stroke-width="2.1"/>
</svg>
<div class="t" style="left:1746.5px;top:1023px;font-size:18px;font-weight:bold;color:#fff">加工</div>


<!-- bottom strip -->
<div class="a" style="left:0;top:1074px;width:1919px;height:1px;background:#b9babc"></div>
<div class="a" style="left:0;top:1075px;width:1919px;height:8px;background:#e4ede9"></div>
<div class="a" style="left:1025px;top:1081px;width:53px;height:4px;border-radius:3px;background:#fafcfb"></div>
<div class="a" style="left:1223px;top:1080px;width:48px;height:6px;border-radius:4px;background:#e9aaa7"></div>
<div class="a" style="left:1287.5px;top:1080px;width:57px;height:6px;border-radius:4px;background:#e9aaa7"></div>
</body></html>
